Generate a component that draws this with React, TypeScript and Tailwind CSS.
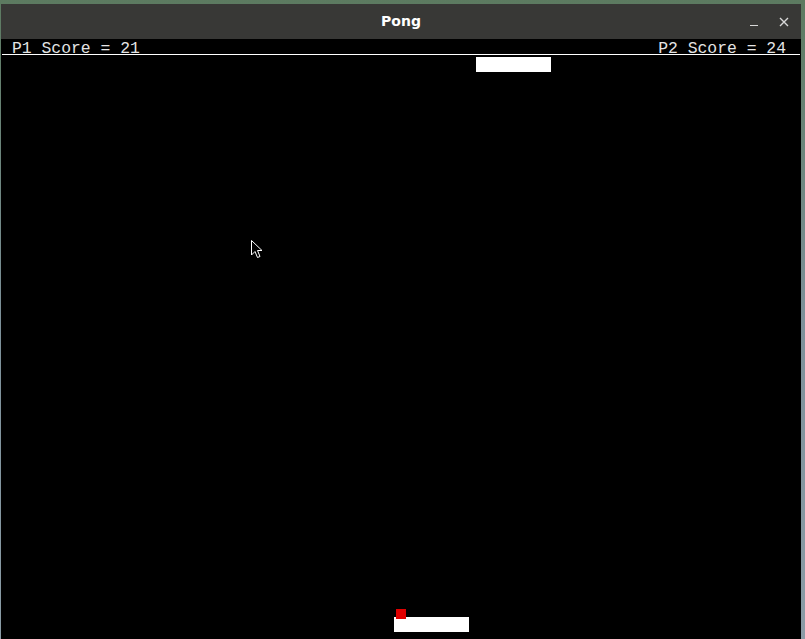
const Cursor = () => (
  <svg width="12" height="19" viewBox="0 0 12 19" className="absolute left-[250px] top-[201px]">
    <path
      d="M0.5 0.5 L0.5 15 L4 11.5 L6.5 17.5 L9 16.5 L6.5 10.5 L11 10.5 Z"
      fill="#000"
      stroke="#fff"
      strokeWidth="1"
    />
  </svg>
);

const App = () => {
  return (
    <div className="w-[805px] h-[639px] overflow-hidden bg-gradient-to-b from-[#5c7a60] via-[#7d919a] to-[#8a9ca6] pt-[4px] pl-[1px]">
      <div className="w-[800px] h-[635px] flex flex-col">
        {/* title bar */}
        <div className="h-[35px] bg-[#383836] flex items-center relative">
          <span className="mx-auto text-white font-bold text-[14px] font-['DejaVu_Sans',sans-serif]">
            Pong
          </span>
          <div className="absolute right-[12px] top-0 h-full flex items-center gap-[21px]">
            <div className="w-[8px] h-[1px] bg-[#d8d8d8] mt-[8px]" />
            <svg width="10" height="10" viewBox="0 0 10 10">
              <path d="M1 1 L9 9 M9 1 L1 9" stroke="#d8d8d8" strokeWidth="1.4" />
            </svg>
          </div>
        </div>
        {/* game area */}
        <div className="flex-1 bg-black relative">
          <div className="flex justify-between pl-[11px] pr-[15px] pt-[2px] h-[15px] text-[16.4px] leading-[16px] text-[#e4e4e4] font-['Liberation_Mono',monospace]">
            <span>P1 Score = 21</span>
            <span>P2 Score = 24</span>
          </div>
          <div className="h-[1px] bg-white ml-[1px] mr-[1px]" />
          <div className="absolute left-[475px] top-[18px] w-[75px] h-[15px] bg-white" />
          <div className="absolute left-[393px] top-[578px] w-[75px] h-[15px] bg-white" />
          <div className="absolute left-[395px] top-[570px] w-[10px] h-[10px] bg-[#e00000]" />
          <Cursor />
        </div>
      </div>
    </div>
  );
};

export default App;
